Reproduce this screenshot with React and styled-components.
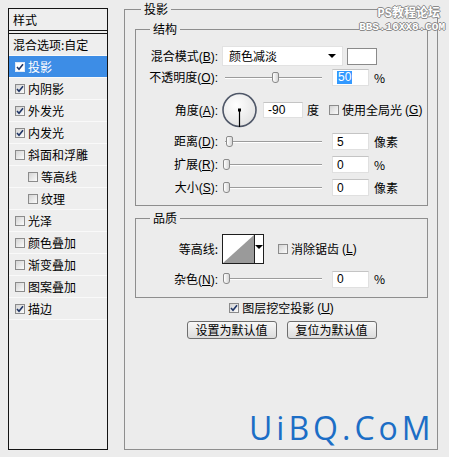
import React from "react";
import styled, { createGlobalStyle } from "styled-components";

const GlobalStyle = createGlobalStyle`
  html, body {
    margin: 0;
    padding: 0;
    background: #ececec;
  }
  body {
    font-family: "Noto Sans CJK SC", "Liberation Sans", sans-serif;
    font-size: 12px;
    color: #000;
  }
`;

const Page = styled.div`
  position: relative;
  width: 449px;
  height: 457px;
  box-sizing: border-box;
  padding-left: 8px;
  display: flex;
  align-items: flex-start;
  gap: 16px;
  overflow: hidden;
`;

/* ---------- left style list ---------- */

const Sidebar = styled.div`
  margin-top: 8px;
  width: 100px;
  height: 442px;
  box-sizing: border-box;
  border: 1px solid #141414;
  background: #eeeeee;
`;

const SideHeader = styled.div`
  height: 21px;
  display: flex;
  align-items: center;
  padding-left: 4px;
  border-bottom: 1px solid #141414;
  margin-bottom: 2px;
  font-size: 12px;
  line-height: 14px;
`;

const StyleList = styled.div`
  border-top: 1px solid #141414;
`;

const StyleRow = styled.div`
  height: 21px;
  display: flex;
  align-items: center;
  gap: 3px;
  padding-left: ${(p) => (p.$plain ? 4 : p.$indent ? 19 : 6)}px;
  border-bottom: 1px solid #f9f9f9;
  background: ${(p) => (p.$selected ? "#3d8de6" : "transparent")};
  color: ${(p) => (p.$selected ? "#fff" : "#000")};
  font-size: 12px;
  line-height: 14px;
`;

/* ---------- checkbox ---------- */

const Box = styled.span`
  flex: none;
  width: 10px;
  height: 10px;
  box-sizing: border-box;
  border: 1px solid ${(p) => (p.$light ? "#dfe9f6" : "#8b8b8b")};
  background: ${(p) =>
    p.$light ? "#ffffff" : "linear-gradient(135deg, #d4d4d4, #fbfbfb)"};
  display: flex;
  align-items: center;
  justify-content: center;
`;

function Check({ checked, light }) {
  return (
    <Box $light={light}>
      {checked && (
        <svg width="8" height="8" viewBox="0 0 8 8">
          <path
            d="M1 4 L3 6.2 L7 1.2"
            fill="none"
            stroke="#1f3566"
            strokeWidth="1.6"
          />
        </svg>
      )}
    </Box>
  );
}

/* ---------- right panel ---------- */

const Panel = styled.fieldset`
  margin: 2px 0 0 0;
  padding: 0 9px 0 10px;
  width: 314px;
  height: 448px;
  box-sizing: border-box;
  border: 1px solid #8e8e8e;
  min-width: 0;
`;

const Legend = styled.legend`
  padding: 0 3px;
  margin-left: ${(p) => p.$offset}px;
  font-size: 12px;
  line-height: 14px;
`;

const Group = styled.fieldset`
  margin: ${(p) => p.$mt}px 0 0 0;
  padding: 0 0 ${(p) => p.$pb}px 0;
  border: 1px solid #8e8e8e;
  min-width: 0;
`;

const Row = styled.div`
  display: flex;
  align-items: center;
  height: ${(p) => p.$h}px;
  margin-top: ${(p) => p.$mt || 0}px;
`;

const Label = styled.span`
  width: 82px;
  margin-right: 4px;
  text-align: right;
  white-space: nowrap;
  font-size: 12px;
  line-height: 14px;
`;

const Text = styled.span`
  font-size: 12px;
  line-height: 14px;
  margin-left: ${(p) => p.$ml || 0}px;
  white-space: nowrap;
`;

const KeyHint = styled.span`
  font-family: "Liberation Sans", Arial, sans-serif;
  font-size: 12px;
  u {
    text-underline-offset: 1px;
  }
`;

function Key({ k, colon }) {
  return (
    <KeyHint>
      (<u>{k}</u>){colon ? ":" : ""}
    </KeyHint>
  );
}

const Select = styled.div`
  width: 121px;
  height: 20px;
  box-sizing: border-box;
  background: #fff;
  border: 1px solid #e2e2e2;
  display: flex;
  align-items: center;
  justify-content: space-between;
  padding: 0 6px 0 6px;
`;

const Arrow = styled.span`
  width: 0;
  height: 0;
  border-left: 4px solid transparent;
  border-right: 4px solid transparent;
  border-top: 4px solid #000;
`;

const Swatch = styled.div`
  width: 30px;
  height: 17px;
  margin-left: 4px;
  box-sizing: border-box;
  background: #fff;
  border: 1px solid #8a8a8a;
`;

const Track = styled.div`
  position: relative;
  width: 97px;
  height: 0;
  margin: 0 10px 0 3px;
  border-top: 1px solid #9c9c9c;
  border-bottom: 1px solid #ffffff;
`;

const Thumb = styled.span`
  position: absolute;
  top: -6px;
  width: 7px;
  height: 11px;
  box-sizing: border-box;
  border: 1px solid #8a8a8a;
  border-radius: 2px 2px 3px 3px;
  background: linear-gradient(90deg, #ffffff, #d6d6d6);
`;

function Slider({ value }) {
  return (
    <Track>
      <Thumb style={{ left: `${(value * 97) / 100 - 2}px` }} />
    </Track>
  );
}

const NumBox = styled.div`
  width: ${(p) => p.$w || 37}px;
  height: ${(p) => p.$h || 17}px;
  margin-left: ${(p) => p.$ml || 0}px;
  box-sizing: border-box;
  background: #fff;
  border: 1px solid #e0e0e0;
  border-top-color: #c4c4c4;
  padding-left: 4px;
  display: flex;
  align-items: center;
  font-family: "Liberation Sans", Arial, sans-serif;
  font-size: 12px;
`;

const Selected = styled.span`
  background: #3399ff;
  color: #fff;
  padding: 0 1px;
  line-height: 13px;
`;

const Unit = styled.span`
  margin-left: 5px;
  font-size: 12px;
  line-height: 14px;
`;

const CheckLabel = styled.label`
  display: flex;
  align-items: center;
  gap: 3px;
  margin-left: ${(p) => p.$ml || 0}px;
  font-size: 12px;
  line-height: 14px;
  white-space: nowrap;
`;

const Contour = styled.div`
  display: flex;
  width: 42px;
  height: 30px;
  box-sizing: border-box;
  border: 1px solid #1e1e1e;
  background: #fff;
`;

const ContourArrow = styled.div`
  flex: 1;
  border-left: 1px solid #1e1e1e;
  display: flex;
  justify-content: center;
  padding-top: 10px;
  box-sizing: border-box;
`;

const Center = styled.div`
  display: flex;
  justify-content: center;
  gap: ${(p) => p.$gap || 0}px;
  margin-top: ${(p) => p.$mt || 0}px;
  height: ${(p) => p.$h}px;
  align-items: center;
`;

const Button = styled.button`
  width: 90px;
  height: 18px;
  padding: 0;
  box-sizing: border-box;
  border: 1px solid #6f6f6f;
  border-radius: 3px;
  background: linear-gradient(#f8f8f8, #dcdcdc);
  font-family: "Noto Sans CJK SC", sans-serif;
  font-size: 12px;
  line-height: 16px;
  color: #000;
`;

/* ---------- watermarks ---------- */

const TopMark = styled.div`
  position: absolute;
  top: 8px;
  right: 4px;
  display: flex;
  flex-direction: column;
  align-items: flex-end;
  color: #fff;
  font-family: "Liberation Mono", "Noto Sans CJK SC", monospace;
  font-weight: bold;
  text-shadow: 1px 0 #8a8a8a, -1px 0 #8a8a8a, 0 1px #8a8a8a, 0 -1px #8a8a8a;
`;

const MarkLine = styled.span`
  font-size: ${(p) => p.$size}px;
  line-height: ${(p) => p.$size + 1}px;
  margin-right: ${(p) => p.$mr || 0}px;
`;

const SiteMark = styled.div`
  position: absolute;
  left: 249px;
  top: 408px;
  font-family: "Open Sans", "Liberation Sans", sans-serif;
  font-size: 32px;
  letter-spacing: 4px;
  color: #1c6ec6;
  line-height: 40px;
`;

const styles = [
  { name: "投影", checked: true, selected: true },
  { name: "内阴影", checked: true },
  { name: "外发光", checked: true },
  { name: "内发光", checked: true },
  { name: "斜面和浮雕" },
  { name: "等高线", indent: true },
  { name: "纹理", indent: true },
  { name: "光泽" },
  { name: "颜色叠加" },
  { name: "渐变叠加" },
  { name: "图案叠加" },
  { name: "描边", checked: true },
];

function AngleDial() {
  return (
    <svg width="35" height="36" viewBox="0 0 35 36">
      <defs>
        <radialGradient id="dialFill" cx="0.4" cy="0.35" r="0.7">
          <stop offset="0" stopColor="#ffffff" />
          <stop offset="1" stopColor="#e2e2e2" />
        </radialGradient>
      </defs>
      <circle cx="17.5" cy="18" r="16.5" fill="url(#dialFill)" stroke="#4f5768" strokeWidth="1.6" />
      <rect x="16" y="16.5" width="3" height="3" fill="#000" />
      <line x1="17.5" y1="18" x2="17.5" y2="35" stroke="#000" strokeWidth="1.2" />
    </svg>
  );
}

export default function App() {
  return (
    <>
      <GlobalStyle />
      <Page>
        <Sidebar>
          <SideHeader>样式</SideHeader>
          <StyleList>
            <StyleRow $plain>混合选项:自定</StyleRow>
            {styles.map((s) => (
              <StyleRow key={s.name} $selected={s.selected} $indent={s.indent}>
                <Check checked={s.checked} light={s.selected} />
                {s.name}
              </StyleRow>
            ))}
          </StyleList>
        </Sidebar>

        <Panel>
          <Legend $offset={6}>投影</Legend>

          <Group $mt={6} $pb={6}>
            <Legend $offset={14}>结构</Legend>
            <Row $h={22} $mt={9}>
              <Label>
                混合模式<Key k="B" colon />
              </Label>
              <Select>
                <Text>颜色减淡</Text>
                <Arrow />
              </Select>
              <Swatch />
            </Row>
            <Row $h={21}>
              <Label>
                不透明度<Key k="O" colon />
              </Label>
              <Slider value={50} />
              <NumBox>
                <Selected>50</Selected>
              </NumBox>
              <Unit>%</Unit>
            </Row>
            <Row $h={36} $mt={4}>
              <Label>
                角度<Key k="A" colon />
              </Label>
              <AngleDial />
              <NumBox $w={40} $h={16} $ml={6}>
                -90
              </NumBox>
              <Text $ml={4}>度</Text>
              <CheckLabel $ml={10}>
                <Check />
                使用全局光<Key k="G" />
              </CheckLabel>
            </Row>
            <Row $h={23} $mt={2}>
              <Label>
                距离<Key k="D" colon />
              </Label>
              <Slider value={3} />
              <NumBox>5</NumBox>
              <Unit>像素</Unit>
            </Row>
            <Row $h={23}>
              <Label>
                扩展<Key k="R" colon />
              </Label>
              <Slider value={0} />
              <NumBox>0</NumBox>
              <Unit>%</Unit>
            </Row>
            <Row $h={23}>
              <Label>
                大小<Key k="S" colon />
              </Label>
              <Slider value={0} />
              <NumBox>0</NumBox>
              <Unit>像素</Unit>
            </Row>
          </Group>

          <Group $mt={5} $pb={7}>
            <Legend $offset={14}>品质</Legend>
            <Row $h={30} $mt={9}>
              <Label>等高线:</Label>
              <Contour>
                <svg width="31" height="28" viewBox="0 0 31 28">
                  <polygon points="0,28 31,0 31,28" fill="#9a9a9a" />
                </svg>
                <ContourArrow>
                  <Arrow />
                </ContourArrow>
              </Contour>
              <CheckLabel $ml={14}>
                <Check />
                消除锯齿<Key k="L" />
              </CheckLabel>
            </Row>
            <Row $h={22} $mt={4}>
              <Label>
                杂色<Key k="N" colon />
              </Label>
              <Slider value={0} />
              <NumBox>0</NumBox>
              <Unit>%</Unit>
            </Row>
          </Group>

          <Center $h={16} $mt={2}>
            <CheckLabel>
              <Check checked />
              图层挖空投影<Key k="U" />
            </CheckLabel>
          </Center>
          <Center $h={18} $mt={5} $gap={10}>
            <Button>设置为默认值</Button>
            <Button>复位为默认值</Button>
          </Center>
        </Panel>

        <TopMark>
          <MarkLine $size={12} $mr={5}>PS教程论坛</MarkLine>
          <MarkLine $size={11}>BBS.16XX8.COM</MarkLine>
        </TopMark>
        <SiteMark>UiBQ.CoM</SiteMark>
      </Page>
    </>
  );
}
